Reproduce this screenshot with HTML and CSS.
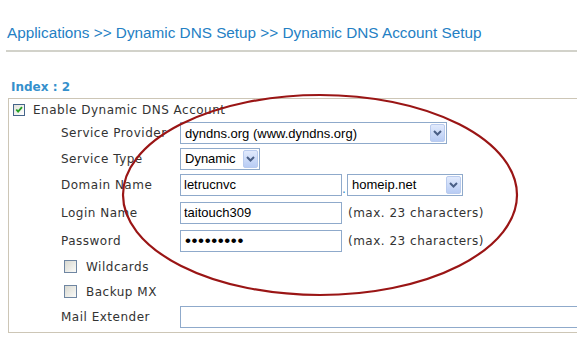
FILE: index.html
```html
<!DOCTYPE html>
<html lang="en">
<head>
  <meta charset="UTF-8">
  <title>Dynamic DNS Account Setup</title>
  <link rel="stylesheet" href="styles.css">
</head>
<body>
  <div class="page">
    <h1 class="crumbs">Applications &gt;&gt; Dynamic DNS Setup &gt;&gt; Dynamic DNS Account Setup</h1>
    <div class="index">Index : 2</div>

    <div class="panel">
      <div class="check-row enable">
        <span class="box"><svg width="11" height="11" viewBox="0 0 11 11"><path d="M2.5 5.5 L4.5 7.8 L8.8 2.8" fill="none" stroke="#23a023" stroke-width="2"/></svg></span>
        <span>Enable Dynamic DNS Account</span>
      </div>

      <label class="label">Service Provider</label>
      <div class="control">
        <div class="select provider">
          <select><option>dyndns.org (www.dyndns.org)</option></select>
          <span class="arrow"><svg width="9" height="6" viewBox="0 0 9 6"><path d="M1 1 L4.5 4.5 L8 1" fill="none" stroke="#4a5f86" stroke-width="2"/></svg></span>
        </div>
      </div>

      <label class="label">Service Type</label>
      <div class="control">
        <div class="select type">
          <select><option>Dynamic</option></select>
          <span class="arrow"><svg width="9" height="6" viewBox="0 0 9 6"><path d="M1 1 L4.5 4.5 L8 1" fill="none" stroke="#4a5f86" stroke-width="2"/></svg></span>
        </div>
      </div>

      <label class="label">Domain Name</label>
      <div class="control">
        <input class="text" type="text" value="letrucnvc">
        <span class="dot">.</span>
        <div class="select domain">
          <select><option>homeip.net</option></select>
          <span class="arrow"><svg width="9" height="6" viewBox="0 0 9 6"><path d="M1 1 L4.5 4.5 L8 1" fill="none" stroke="#4a5f86" stroke-width="2"/></svg></span>
        </div>
      </div>

      <label class="label">Login Name</label>
      <div class="control">
        <input class="text" type="text" value="taitouch309">
        <span class="hint">(max. 23 characters)</span>
      </div>

      <label class="label">Password</label>
      <div class="control">
        <input class="text pass" type="password" value="secret123">
        <span class="hint">(max. 23 characters)</span>
      </div>

      <div class="check-row sub">
        <span class="box"></span>
        <span>Wildcards</span>
      </div>

      <div class="check-row sub">
        <span class="box"></span>
        <span>Backup MX</span>
      </div>

      <label class="label">Mail Extender</label>
      <div class="control">
        <input class="text wide" type="text" value="">
      </div>
    </div>

    <svg class="ring" width="577" height="347" viewBox="0 0 577 347">
      <ellipse cx="320" cy="195" rx="197" ry="100" fill="none" stroke="#9a1515" stroke-width="2.2"/>
    </svg>
  </div>
</body>
</html>
```

FILE: styles.css
```css
body {
  margin: 0;
  background: #fff;
  font-family: "DejaVu Sans", Verdana, sans-serif;
  color: #333;
}

.page {
  position: relative;
  width: 577px;
  height: 347px;
  overflow: hidden;
}

.crumbs {
  margin: 0 0 0 6px;
  padding: 24px 0 8px 1px;
  font-family: "Liberation Sans", Arial, sans-serif;
  font-size: 15.3px;
  line-height: 18px;
  font-weight: normal;
  color: #2480c4;
  border-bottom: 2px solid #d2d2ca;
  white-space: nowrap;
}

.index {
  margin: 28px 0 3px 11px;
  font-size: 12px;
  line-height: 15px;
  font-weight: bold;
  color: #3590cc;
}

.panel {
  margin-left: 8px;
  padding-bottom: 3px;
  border: 1px solid #cdc6b6;
  border-right: none;
  display: grid;
  grid-template-columns: 171px 1fr;
  grid-template-rows: 21px 26px 25px 27px 29px 27px 25px 25px 25px;
  font-size: 12px;
  letter-spacing: 0.5px;
}

.label {
  display: flex;
  align-items: center;
  padding-left: 52px;
  white-space: nowrap;
}

.control {
  display: flex;
  align-items: center;
  white-space: nowrap;
}

.check-row {
  grid-column: 1 / 3;
  display: flex;
  align-items: center;
}

.enable {
  padding-left: 4px;
  gap: 8px;
}

.sub {
  padding-left: 55px;
  gap: 9px;
}

.box {
  width: 13px;
  height: 13px;
  box-sizing: border-box;
  border: 1px solid #6f86a2;
  background: linear-gradient(135deg, #d8d8d0, #fbfbf8);
  display: flex;
  align-items: center;
  justify-content: center;
}

.enable .box {
  width: 12px;
  height: 12px;
  border-color: #45658a;
  background: linear-gradient(135deg, #e2e2dc, #fff);
}

.text {
  height: 22px;
  width: 162px;
  box-sizing: border-box;
  margin: 0;
  padding: 0 3px;
  border: 1px solid #8faacb;
  font-family: "Liberation Sans", Arial, sans-serif;
  font-size: 13px;
  letter-spacing: 0;
  color: #000;
  outline: none;
}

.pass {
  font-size: 17px;
  letter-spacing: 0.6px;
  padding-left: 4px;
}

.wide {
  width: 420px;
}

.dot {
  width: 5px;
  padding-top: 8px;
  color: #2a86c6;
}

.hint {
  margin-left: 6px;
}

.select {
  height: 22px;
  box-sizing: border-box;
  border: 1px solid #8faacb;
  display: flex;
  align-items: center;
  background: #fff;
}

.select select {
  flex: 1;
  min-width: 0;
  height: 100%;
  appearance: none;
  border: none;
  background: transparent;
  padding: 0 0 0 4px;
  margin: 0;
  font-family: "Liberation Sans", Arial, sans-serif;
  font-size: 13px;
  color: #000;
  outline: none;
}

.provider {
  width: 267px;
}

.type {
  width: 80px;
}

.domain {
  width: 116px;
}

.arrow {
  width: 15px;
  height: 18px;
  margin-right: 1px;
  box-sizing: border-box;
  border: 1px solid #b9cbee;
  border-radius: 2px;
  background: linear-gradient(#e1eafc, #b8ccf4);
  display: flex;
  align-items: center;
  justify-content: center;
}

.ring {
  position: absolute;
  top: 0;
  left: 0;
  pointer-events: none;
}
```
